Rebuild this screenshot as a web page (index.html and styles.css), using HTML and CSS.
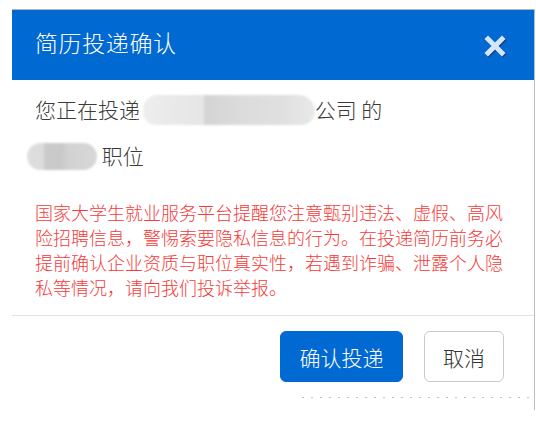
FILE: index.html
```html
<!DOCTYPE html>
<html lang="zh-CN">

<head>
    <meta charset="UTF-8">
    <meta name="viewport" content="width=device-width, initial-scale=1.0">
    <title>简历投递确认</title>
    <link rel="stylesheet" href="styles.css">
</head>

<body>
    <div class="modal">
        <div class="modal-header">
            <h3 class="modal-title">简历投递确认</h3>
            <span class="close-btn">
                <svg width="26" height="26" viewBox="0 0 26 26">
                    <path d="M6 6 L20 20 M20 6 L6 20" stroke="#1b3a5c" stroke-width="5" stroke-linecap="square" transform="translate(1.2 1.2)" opacity="0.7"/>
                    <path d="M6 6 L20 20 M20 6 L6 20" stroke="#d4e6f7" stroke-width="5" stroke-linecap="square"/>
                </svg>
            </span>
        </div>
        <div class="modal-body">
            <p class="line">您正在投递 <span class="blur blur-company"></span>公司 的</p>
            <p class="line"><span class="blur blur-job"></span> 职位</p>
            <p class="warning">国家大学生就业服务平台提醒您注意甄别违法、虚假、高风险招聘信息，警惕索要隐私信息的行为。在投递简历前务必提前确认企业资质与职位真实性，若遇到诈骗、泄露个人隐私等情况，请向我们投诉举报。</p>
        </div>
        <div class="modal-footer">
            <button class="btn btn-primary">确认投递</button>
            <button class="btn btn-default">取消</button>
        </div>
        <div class="peek"></div>
    </div>
</body>

</html>
```

FILE: styles.css
```css
body {
    margin: 0;
    padding: 9px 0 0 12px;
    background-color: #fff;
    font-family: "Noto Sans CJK SC", "Noto Sans", sans-serif;
    font-weight: 300;
}

.modal {
    width: 522px;
    border-top: 1px solid #b4b4b4;
    border-right: 1px solid #bdbdbd;
    background-color: #fff;
}

.modal-header {
    height: 70px;
    background-color: #0069d2;
    display: flex;
    align-items: center;
    justify-content: space-between;
    padding: 0 26px 0 23px;
}

.modal-title {
    margin: 0;
    margin-top: -6px;
    color: #fff;
    font-size: 23px;
    font-weight: 300;
    letter-spacing: 0.6px;
}

.close-btn {
    display: flex;
    margin-top: 2px;
}

.modal-body {
    padding: 6px 23px 15px 23px;
    border-bottom: 1px solid #e3e3e3;
}

.line {
    margin: 0;
    height: 46px;
    line-height: 46px;
    font-size: 21px;
    color: #3a3a3a;
}

.blur {
    display: inline-block;
    vertical-align: middle;
    filter: blur(1.2px);
}

.blur-company {
    width: 172px;
    height: 30px;
    margin: -4px 0 0 -2px;
    border-radius: 16px 18px 15px 14px;
    background:
        linear-gradient(90deg, #eeeeee 0, #e9e9e9 30px, #e6e6e6 60px, #d4d4d4 62px, #dcdcdc 100px, #e0e0e0 140px, #e9e9e9 172px);
}

.blur-job {
    width: 70px;
    height: 27px;
    margin: -4px 0 0 -8px;
    border-radius: 14px;
    background:
        linear-gradient(90deg, #dedede 0, #dcdcdc 16px, #cbcbcb 18px, #c9c9c9 36px, #d2d2d2 40px, #d7d7d7 70px);
}

.warning {
    margin: 22px 0 0 0;
    font-size: 18px;
    line-height: 25px;
    color: #f53a3a;
}

.modal-footer {
    display: flex;
    justify-content: flex-end;
    gap: 21px;
    padding: 15px 30px 15px 0;
}

.btn {
    height: 51px;
    border-radius: 6px;
    font-family: "Noto Sans CJK SC", "Noto Sans", sans-serif;
    font-size: 21px;
    font-weight: 300;
    cursor: pointer;
}

.btn-primary {
    width: 123px;
    background-color: #0069d2;
    border: 1px solid #0069d2;
    color: #fff;
}

.btn-default {
    width: 80px;
    background-color: #fff;
    border: 1px solid #cacaca;
    color: #333;
}

.peek {
    height: 13px;
    margin-left: 290px;
    background: repeating-linear-gradient(90deg, #a8a8a8 0, #a8a8a8 2px, transparent 2px, transparent 9px) top / 100% 1px no-repeat;
    opacity: 0.7;
}
```
